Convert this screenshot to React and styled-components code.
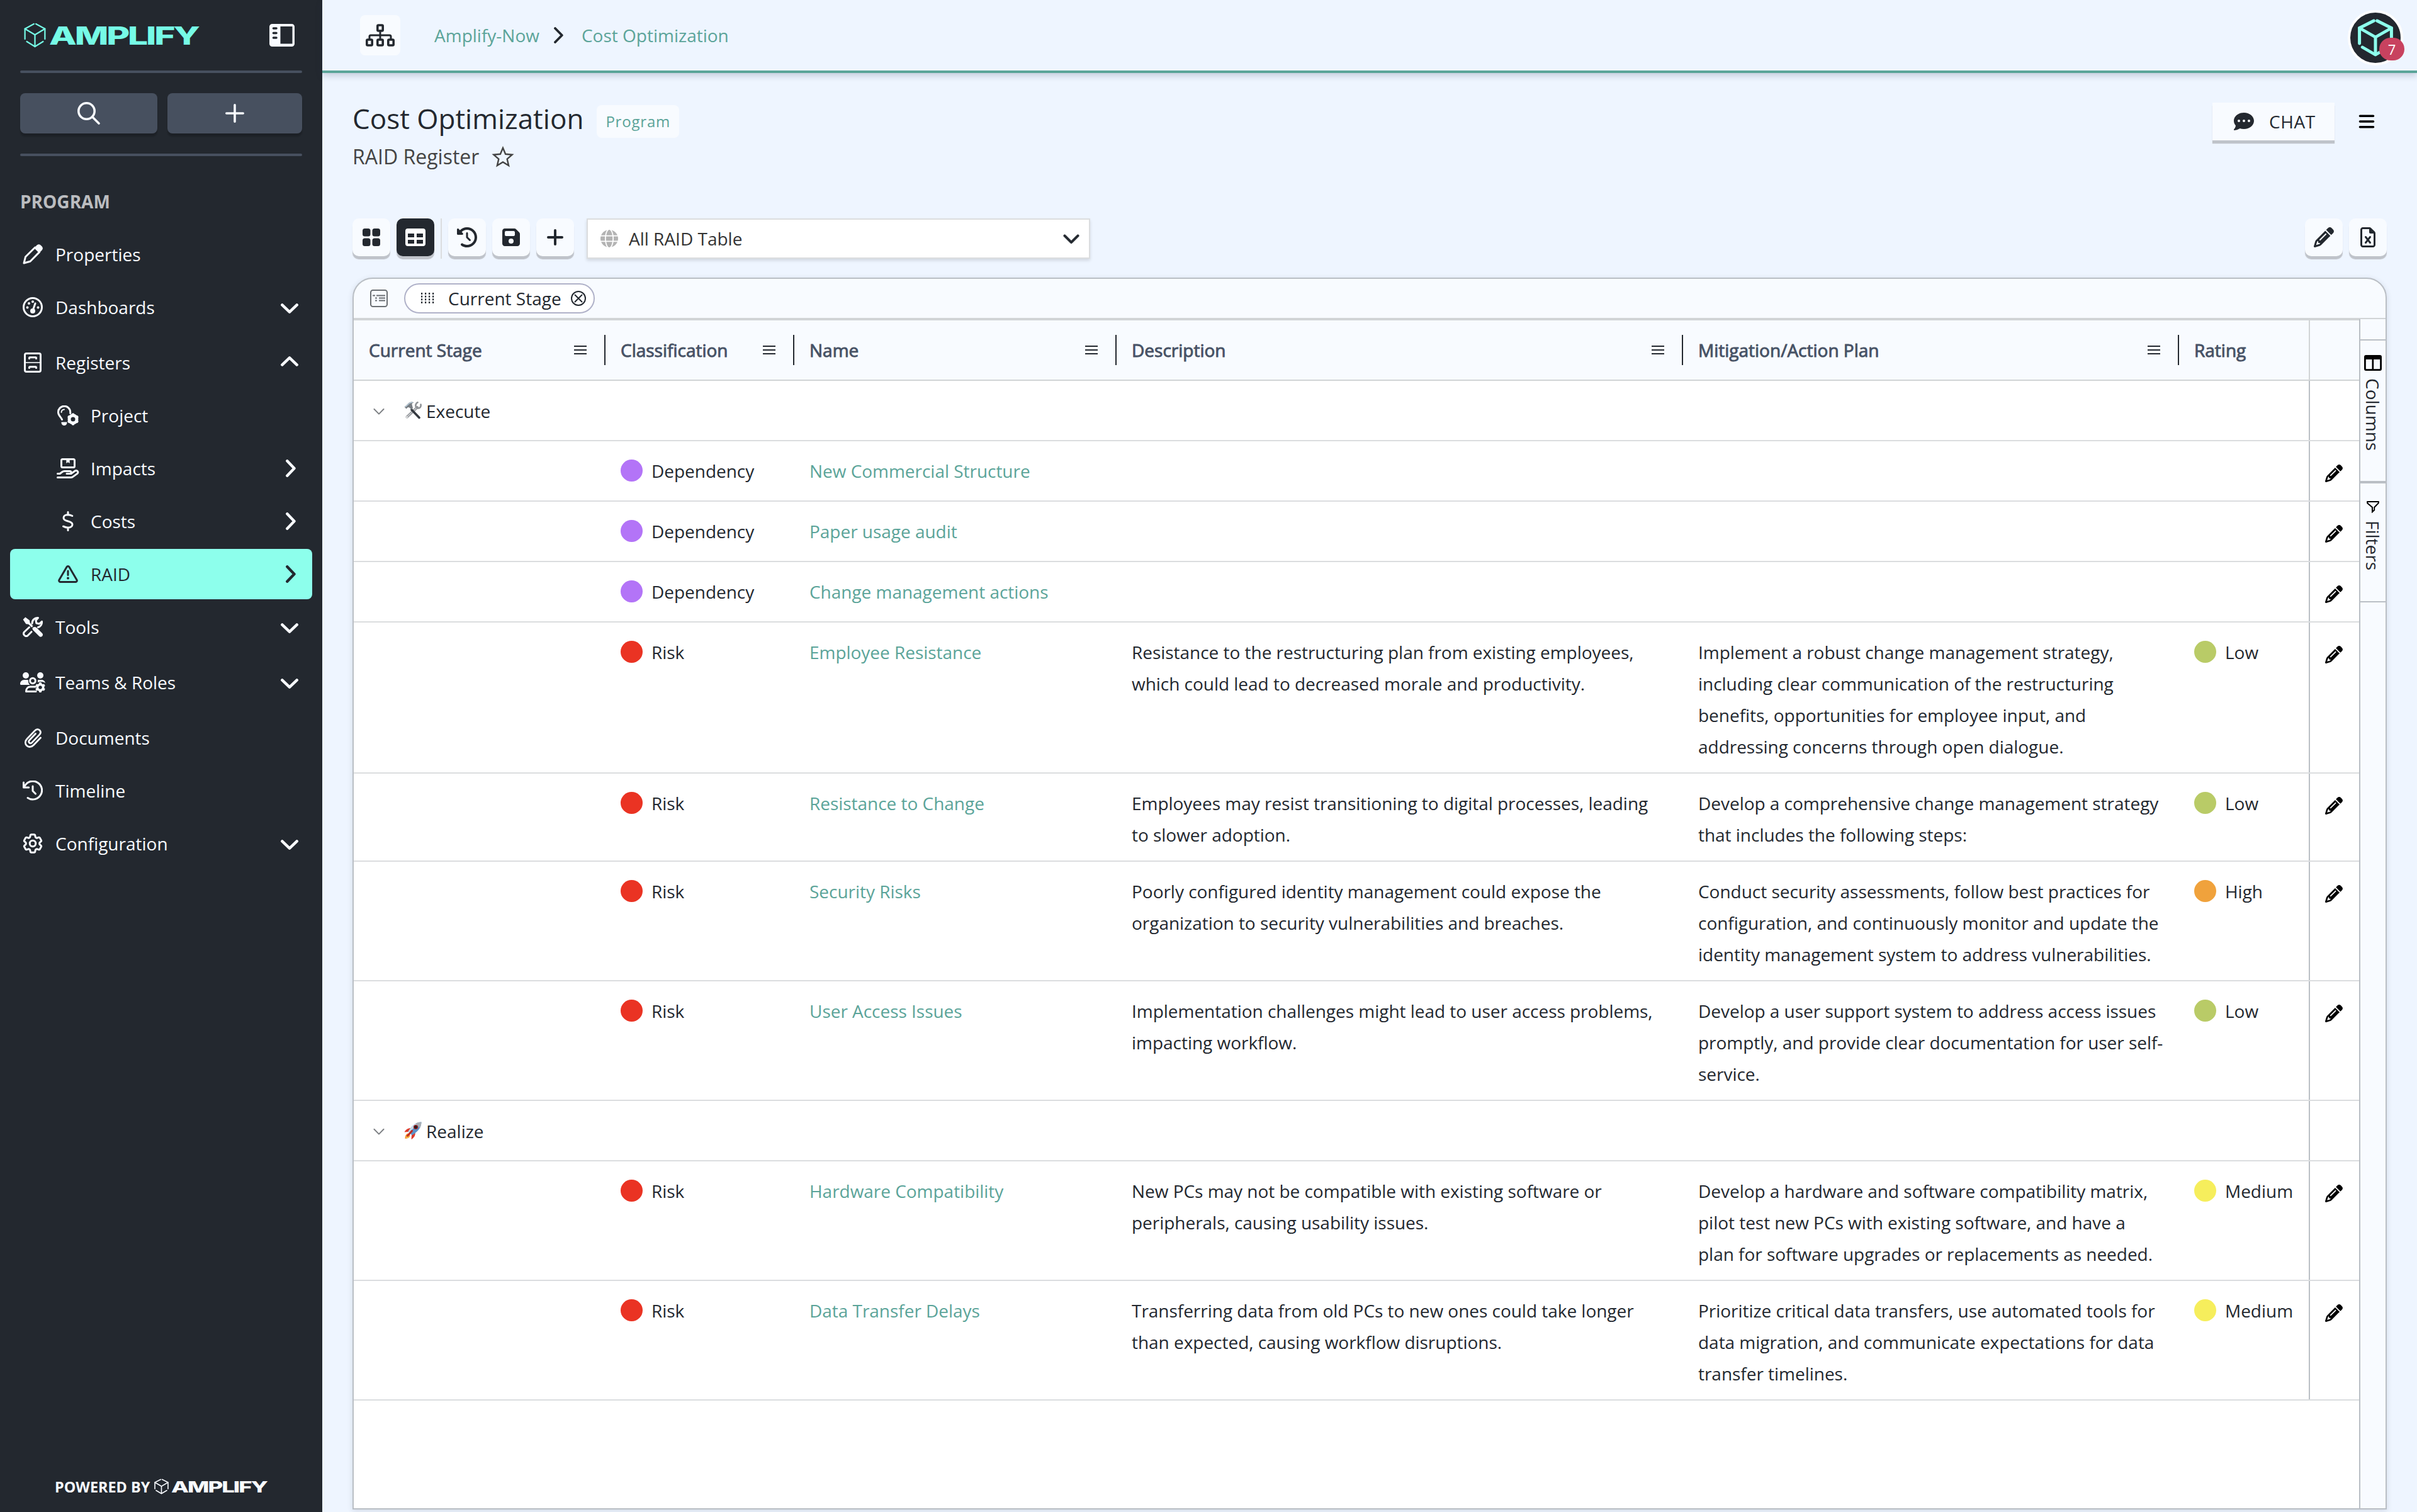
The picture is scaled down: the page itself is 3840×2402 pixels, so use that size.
import React from 'react';
import styled, { createGlobalStyle, css } from 'styled-components';
import {
  FaBars,
  FaChevronDown,
  FaClockRotateLeft,
  FaCommentDots,
  FaFloppyDisk,
  FaGlobe,
  FaPencil,
  FaRegFileExcel,
} from 'react-icons/fa6';
import { HiOutlineCog6Tooth } from 'react-icons/hi2';

const c = {
  ink: '#23282f',
  slate: '#47505f',
  snow: '#f8fbff',
  page: '#eef5ff',
  mint: '#8dffec',
  logo: '#76fbe6',
  teal: '#5ba499',
  line: '#dbdddf',
  headLine: '#d1d4d6',
  frame: '#babfc5',
};

const GlobalStyle = createGlobalStyle`
  *, *::before, *::after { box-sizing: border-box; }
  body {
    margin: 0;
    overflow: hidden;
    background: ${c.page};
    color: ${c.ink};
    font-family: 'Open Sans', 'Noto Sans', sans-serif;
    font-size: 28px;
    line-height: 40px;
  }
  svg { display: block; flex: none; }
  button { font: inherit; color: inherit; border: 0; padding: 0; }
`;

/* ---------- icons ---------- */

const Stroke = ({ w = 32, h = 32, sw = 3, children, ...rest }) => (
  <svg
    width={w}
    height={h}
    viewBox={`0 0 ${w} ${h}`}
    fill="none"
    stroke="currentColor"
    strokeWidth={sw}
    strokeLinecap="round"
    strokeLinejoin="round"
    {...rest}
  >
    {children}
  </svg>
);

const Cog = ({ x, y, r, teeth = 6, ring = 3.4 }) => (
  <g transform={`translate(${x} ${y})`}>
    <circle r={r - 3.4} strokeWidth={ring} />
    {Array.from({ length: teeth }, (_, i) => (
      <rect
        key={i}
        x={-2}
        y={-r}
        width={4}
        height={3.6}
        rx={1}
        fill="currentColor"
        stroke="none"
        transform={`rotate(${(360 / teeth) * i})`}
      />
    ))}
  </g>
);

const CubeMark = ({ w, h, sw }) => (
  <svg
    width={w}
    height={h}
    viewBox="0 0 54 60"
    preserveAspectRatio="none"
    fill="none"
    stroke="currentColor"
    strokeWidth={sw}
    strokeLinejoin="round"
    strokeLinecap="round"
  >
    <path d="M24.5 3 2.5 14.5v24.5" />
    <path d="M29.500 3 51.500 14.500v24.500" />
    <path d="M2.500 14.500 27 29l24.500-14.500" />
    <path d="M27 29v27.500" />
    <path d="M7 45 27 57l20-12" />
  </svg>
);

const SearchIcon = () => (
  <Stroke w={36} h={36} sw={3.6}>
    <circle cx="14.5" cy="14.5" r="12.700" />
    <path d="m24 24 10 10" />
  </Stroke>
);

const PlusIcon = ({ size = 30, sw = 3.6 }) => (
  <Stroke w={size} h={size} sw={sw}>
    <path d={`M${size / 2} ${sw / 2}V${size - sw / 2}M${sw / 2} ${size / 2}H${size - sw / 2}`} />
  </Stroke>
);

const PanelIcon = () => (
  <svg width="40" height="36" viewBox="0 0 40 36">
    <path
      fill="currentColor"
      fillRule="evenodd"
      d="M4.500 0h31A4.500 4.500 0 0 1 40 4.500v27a4.500 4.500 0 0 1-4.500 4.500h-31A4.500 4.500 0 0 1 0 31.500v-27A4.500 4.500 0 0 1 4.500 0ZM17.500 4v27.500h19V4Z"
    />
    <path d="M6.500 7h4.500M6.500 14.500h4.500M6.500 22h4.500" stroke={c.ink} strokeWidth="3.600" strokeLinecap="round" />
  </svg>
);

const SitemapIcon = () => (
  <Stroke w={46} h={36} sw={3.6}>
    <rect x="18.800" y="2" width="8.400" height="9" rx="1.500" />
    <rect x="1.800" y="25" width="8.400" height="9" rx="1.500" />
    <rect x="18.800" y="25" width="8.400" height="9" rx="1.500" />
    <rect x="35.800" y="25" width="8.400" height="9" rx="1.500" />
    <path d="M23 11v13M6 24v-4a2 2 0 0 1 2-2h30a2 2 0 0 1 2 2v4" strokeWidth="3" />
  </Stroke>
);

const PenOutline = () => (
  <Stroke>
    <path d="M2 30 4.500 20 19.500 5.200l7.200 7.200L12 27.200Z" />
    <path
      d="m18.500 5.500 3.800-3.800c2-2 4.500-2 6.300-.300l2 2c1.800 1.800 1.700 4.300-.200 6.300l-3.800 3.800Z"
      fill="currentColor"
      stroke="none"
    />
  </Stroke>
);

const GaugeIcon = () => (
  <Stroke>
    <circle cx="16" cy="16" r="14.500" />
    <path d="M16.500 20 20 10" />
    <g fill="currentColor" stroke="none">
      <circle cx="16" cy="22" r="4" />
      <circle cx="7.500" cy="16.500" r="2" />
      <circle cx="24.500" cy="16.500" r="2" />
      <circle cx="10" cy="10" r="2" />
      <circle cx="16" cy="7.200" r="2" />
    </g>
  </Stroke>
);

const CabinetIcon = () => (
  <Stroke>
    <rect x="3.500" y="1.500" width="25" height="29" rx="2.500" />
    <path d="M4 16h24" strokeWidth="2" opacity="0.8" />
    <path d="M10.500 9.500V8.800q0-1 1-1h9q1 0 1 1v.700M10.500 24.500v-.700q0-1 1-1h9q1 0 1 1v.700" />
  </Stroke>
);

const BulbGearIcon = () => (
  <Stroke w={36} h={32}>
    <path d="M8.500 22.500C7.500 19 2.500 16.500 2.500 11a9.600 9.600 0 0 1 19.200-.500v2" />
    <path d="M7.500 11a4.500 4.500 0 0 1 4.500-4.500" strokeWidth="2" />
    <path d="M7.500 26.500h9v1a4.500 4.500 0 0 1-9 0Z" fill="currentColor" stroke="none" />
    <Cog x={26} y={22} r={9.400} ring={5} />
  </Stroke>
);

const HandBoxIcon = () => (
  <Stroke w={36} h={32}>
    <rect x="7.500" y="1.500" width="21" height="13" rx="2" />
    <path d="M15.300 2h5.400v6L18 6.300 15.300 8Z" fill="currentColor" stroke="none" />
    <path d="M1.500 24.500h3.700l3.600-2.800a6 6 0 0 1 3.500-1.200h8.700a2 2 0 0 1 0 4H16h7l6.300-4.400a3 3 0 0 1 4 .600 2.500 2.500 0 0 1-.500 3.700l-6.600 4.700a6 6 0 0 1-3.400 1.400H1.500" />
  </Stroke>
);

const DollarIcon = () => (
  <Stroke w={20} h={32}>
    <path d="M10 1.500V6M10 26v4.500M16.800 7.500C14 6 11.500 5.800 9.500 5.800 5.500 5.800 3 7.800 3 10.700c0 3.300 3 4.300 7 5.300 4.200 1 7 2.200 7 5.300 0 3-2.800 4.900-7 4.900-2.600 0-5-.700-7.500-2" />
  </Stroke>
);

const WarnIcon = () => (
  <Stroke h={28}>
    <path d="M14 2.700a2.300 2.300 0 0 1 4 0l12 20.500a2.200 2.200 0 0 1-2 3.300H4a2.200 2.200 0 0 1-2-3.300Z" />
    <path d="M16 9v6.500" />
    <circle cx="16" cy="20.500" r="2" fill="currentColor" stroke="none" />
  </Stroke>
);

const ToolsIcon = () => (
  <Stroke>
    <g fill="currentColor" stroke="none">
      <path d="M.600 4.300 4.300.600l6.700 4.900.600 4 5 5-2.300 2.300-5-5-4-.600Z" />
      <path d="M15.500 17.800c1-1.300 3.600-2.700 6.500-.700l8.800 8.700c1.600 1.600 1.600 3.400.200 4.900s-3.500 1.400-5-.100l-8.800-8.800c-1.500-1.500-1.700-2.700-1.700-4Z" />
    </g>
    <path d="m10.500 16.500-8 7.500a4 4 0 0 0 5.500 5.700l6-6" />
    <path d="M15 10.500c0-5.500 4-9.300 9.500-9l-3.500 4 .800 4.500 4.700 1 4-3.700c.500 4.700-2.500 8.200-6 9.200" />
  </Stroke>
);

const TeamGearIcon = () => (
  <Stroke w={40} h={32}>
    <g fill="currentColor" stroke="none">
      <circle cx="9" cy="5" r="5" />
      <circle cx="32" cy="5" r="5" />
      <path d="M0 18.500C0 15 2.500 12 6.500 12h4.300c1 0 1.500.200 2.200.500-.500 3 .500 5.500 2.500 7.500H1.500Q0 20 0 18.500Z" />
      <path d="M28 12.300c.700-.200 1.200-.300 2-.300h4c3.300 0 5.500 2.500 6 5-2.500-1.500-7-3-12-1Z" />
    </g>
    <circle cx="20" cy="13.500" r="4.300" />
    <path d="M25 30.500H9.500c0-4.800 3-7.500 6.500-7.500h8" />
    <Cog x={32} y={24} r={8} ring={3.600} />
  </Stroke>
);

const ClipIcon = () => (
  <Stroke w={28} h={32} sw={2.800}>
    <path d="M26.500 16 15.500 27.500c-3.500 3.600-8 4-11 1s-2.800-7.300.500-10.700L17.500 4.600c2.300-2.400 5.300-2.700 7.400-.600s1.900 5-.400 7.400L12.800 23.600c-1.500 1.500-3 1.600-4.200.400s-1.200-2.800.200-4.200L18.500 9.500" />
  </Stroke>
);

const HistoryIcon = () => (
  <Stroke>
    <path d="M1.500 3v8h8.200" />
    <path d="M2.500 10.500A14.500 14.500 0 1 1 8 27.500" />
    <path d="M16 9v7.500l4.500 4.500" />
  </Stroke>
);

const Chevron = ({ dir, sw = 4.4 }) =>
  dir === 'right' ? (
    <Stroke w={16} h={28} sw={sw}>
      <path d="m2.300 2.300 11.200 11.700L2.300 25.700" />
    </Stroke>
  ) : (
    <Stroke w={28} h={16} sw={sw}>
      <path d={dir === 'up' ? 'M2.300 13.600 14 2.400l11.700 11.200' : 'M2.300 2.400 14 13.600 25.700 2.400'} />
    </Stroke>
  );

const StarIcon = () => (
  <svg width="36" height="34" viewBox="0 0 36 34" fill="none" stroke="currentColor" strokeWidth="2.400">
    <path d="m18 3 4.100 9.800 10.600.900-8 7 2.400 10.300L18 25.500 8.900 31l2.400-10.300-8-7 10.600-.900Z" />
  </svg>
);

const CardsIcon = () => (
  <svg width="28" height="28" viewBox="0 0 28 28" fill="currentColor">
    <rect width="12.500" height="12.500" rx="3.500" />
    <rect x="15.500" width="12.500" height="12.500" rx="3.500" />
    <rect y="15.500" width="12.500" height="12.500" rx="3.500" />
    <rect x="15.500" y="15.500" width="12.500" height="12.500" rx="3.500" />
  </svg>
);

const TableIcon = () => (
  <svg width="32" height="28" viewBox="0 0 32 28">
    <path
      fill="currentColor"
      fillRule="evenodd"
      d="M4 0h24a4 4 0 0 1 4 4v20a4 4 0 0 1-4 4H4a4 4 0 0 1-4-4V4a4 4 0 0 1 4-4ZM4 8v6h10V8ZM18 8v6h10V8ZM4 18v6h10v-6ZM18 18v6h10v-6Z"
    />
  </svg>
);

const GroupIcon = () => (
  <Stroke w={28} h={28} sw={2} stroke="#6b6f73">
    <rect x="1" y="1" width="26" height="26" rx="3.500" />
    <path d="M4 9.500h4M10 9.500h14M8 13.500h3M14 13.500h10M8 17.500h3M14 17.500h10" strokeLinecap="butt" />
  </Stroke>
);

const GripIcon = () => (
  <svg width="22" height="18" viewBox="0 0 22 18" fill="currentColor">
    {[0, 1, 2, 3].map((r) =>
      [0, 1, 2, 3].map((k) => <rect key={`${r}${k}`} x={k * 6} y={r * 4.700} width="2.200" height="2.800" />),
    )}
  </svg>
);

const CloseCircle = () => (
  <Stroke w={24} h={24} sw={2}>
    <circle cx="12" cy="12" r="11" />
    <path d="m6.500 6.500 11 11m0-11-11 11" />
  </Stroke>
);

const MenuIcon = () => (
  <svg width="20" height="14" viewBox="0 0 20 14" fill="currentColor">
    <path d="M0 0h20v2H0zM0 6h20v2H0zM0 12h20v2H0z" />
  </svg>
);

const ColumnsIcon = () => (
  <svg width="28" height="25" viewBox="0 0 28 25">
    <path
      fill="#000"
      fillRule="evenodd"
      d="M3 0h22a3 3 0 0 1 3 3v19a3 3 0 0 1-3 3H3a3 3 0 0 1-3-3V3a3 3 0 0 1 3-3ZM2.800 7v14.500q0 .700.700.700h9V7ZM15.200 7v15.200h9.300q.700 0 .700-.700V7Z"
    />
  </svg>
);

const FilterIcon = () => (
  <svg width="20" height="19" viewBox="0 0 20 19" fill="none" stroke="#000" strokeWidth="2">
    <path d="M1.200 1h17.600v2.200L12.200 10v4.200l-3.200 3V10L1.200 3.200Z" />
  </svg>
);

const HammerWrench = () => (
  <svg width="28" height="28" viewBox="0 0 28 28" fill="none" strokeLinecap="round">
    <path d="M21 9 4.500 24.500" stroke="#8f9296" strokeWidth="4" />
    <path d="M20.500 9.500 6 23" stroke="#cfd2d5" strokeWidth="1.400" />
    <path d="m12 13 12 12.500" stroke="#34393f" strokeWidth="3.600" />
    <path d="M26.500 4.500c.800 3.700-1.500 6.500-4.500 6-2.800-.500-4.300-3.200-3.300-6C19.200 3 20 1.800 21.500 1.300" stroke="#8f9296" strokeWidth="2.600" />
    <path d="M.700 8.500 7 2.500C10 .200 13 0 15.500 1.200c-2.500.700-3.500 2-2.800 4.300l1.300 4.800-2.500 2.500L8.500 9.500c-1.500-1-2.500-.600-3.500.5l-1.500 1.500Z" fill="#787d83" />
    <path d="M2.500 8 8 3c2-1.500 3.500-1.800 5-1.700" stroke="#b9cfdd" strokeWidth="1.500" />
    <circle cx="4.500" cy="24.500" r="1.200" fill="#fff" />
  </svg>
);

const Rocket = () => (
  <svg width="28" height="28" viewBox="0 0 28 28">
    <path d="M11.500 10.500C7 9.500 2.500 12.500.500 16.500l7-.500ZM17.500 17c1 4.500-2 9-6 11l.500-7Z" fill="#e03a2a" />
    <path d="M6.500 18.500C3 19 1.500 22.500 1.500 27c4.500-.200 8-2 8-5.500Z" fill="#f3912f" />
    <path d="M6.500 20.500c-2 .700-3 2.700-3 5 2.500-.200 4.300-1.300 5-3.200Z" fill="#fbe04b" />
    <path d="M27.500.500C20 .700 13.500 4.500 6.500 15.500l6 6C23.500 15 27.300 8 27.500.500Z" fill="#5d92c8" />
    <path d="M27.500.500C20 .700 13.500 4.500 6.500 15.500l2 2C15 9.500 21 4.500 27.500.500Z" fill="#c6d9e8" />
    <path d="M27.500.500c-3.500.100-6.500.700-9.500 2.500l7 7c1.800-3 2.400-6 2.500-9.500Z" fill="#a7aeb5" />
    <circle cx="18.500" cy="8.500" r="3.600" fill="#a32020" />
    <circle cx="18.500" cy="8.500" r="2.300" fill="#1c1f24" />
    <path d="M12.500 14.500 5.500 22.500" stroke="#c22c22" strokeWidth="3" strokeLinecap="round" />
  </svg>
);

/* ---------- brand ---------- */

const BrandRow = styled.div`
  display: flex;
  align-items: center;
  gap: ${(p) => p.$gap}px;
  color: ${(p) => p.$color};
`;

const Wordmark = ({ w, size }) => (
  <svg width={w + 8} height={size * 1.4} viewBox={`0 0 ${w + 8} ${size * 1.4}`} fill="currentColor" overflow="visible">
    <text
      x="0"
      y={size * 1.075}
      fontFamily="Inter, 'Liberation Sans', sans-serif"
      fontWeight="800"
      fontSize={size}
      letterSpacing={-size * 0.055}
      textLength={w}
      lengthAdjust="spacingAndGlyphs"
    >
      AMPLIFY
    </text>
  </svg>
);

/* ---------- sidebar ---------- */

const Shell = styled.div`
  display: flex;
  width: 3840px;
  height: 2402px;
  overflow: hidden;
`;

const Sidebar = styled.aside`
  display: flex;
  flex-direction: column;
  width: 512px;
  flex: none;
  background: ${c.ink};
  color: ${c.snow};
`;

const SideTop = styled.div`
  display: flex;
  align-items: center;
  justify-content: space-between;
  height: 112px;
  padding: 0 44px 0 38px;
`;

const Rule = styled.hr`
  width: 448px;
  height: 4px;
  margin: 0 32px;
  border: 0;
  border-radius: 2px;
  background: ${c.slate};
`;

const QuickActions = styled.div`
  display: grid;
  grid-template-columns: 218px 214px;
  gap: 16px;
  padding: 32px;
`;

const QuickButton = styled.button`
  display: flex;
  align-items: center;
  justify-content: center;
  height: 64px;
  border-radius: 8px;
  background: ${c.slate};
  color: ${c.snow};
  box-shadow: 0 5px 2px rgba(0, 0, 0, 0.18);
`;

const SectionTitle = styled.h2`
  margin: 52px 0 24px 32px;
  font-size: 28px;
  line-height: 40px;
  font-weight: 700;
  color: #bbbdc0;
`;

const NavItem = styled.a`
  display: flex;
  align-items: center;
  height: 80px;
  margin: 0 16px ${(p) => p.$after}px;
  padding: 0 22px 0 ${(p) => (p.$sub ? 68 : 12)}px;
  border-radius: 8px;
  ${(p) =>
    p.$active &&
    css`
      background: ${c.mint};
      color: ${c.ink};
    `}
`;

const NavIcon = styled.span`
  display: flex;
  justify-content: center;
  width: 48px;
  margin-right: 12px;
`;

const NavLabel = styled.span`
  flex: 1;
`;

const NavArrow = styled.span`
  display: flex;
  justify-content: center;
  width: 28px;
  padding-top: ${(p) => (p.$dir === 'down' ? 4 : 0)}px;
  padding-bottom: ${(p) => (p.$dir === 'up' ? 4 : 0)}px;
  padding-left: ${(p) => (p.$dir === 'right' ? 4 : 0)}px;
`;

const Powered = styled.div`
  display: flex;
  align-items: center;
  gap: 7px;
  margin: auto 0 20px 87px;
  font-size: 23.400px;
  font-weight: 700;
  line-height: 40px;
`;

const nav = [
  { label: 'Properties', icon: <PenOutline />, after: 4 },
  { label: 'Dashboards', icon: <GaugeIcon />, dir: 'down', after: 8 },
  { label: 'Registers', icon: <CabinetIcon />, dir: 'up', after: 4 },
  { label: 'Project', icon: <BulbGearIcon />, sub: true, after: 4 },
  { label: 'Impacts', icon: <HandBoxIcon />, sub: true, dir: 'right', after: 4 },
  { label: 'Costs', icon: <DollarIcon />, sub: true, dir: 'right', after: 4 },
  { label: 'RAID', icon: <WarnIcon />, sub: true, dir: 'right', active: true, after: 4 },
  { label: 'Tools', icon: <ToolsIcon />, dir: 'down', after: 8 },
  { label: 'Teams & Roles', icon: <TeamGearIcon />, dir: 'down', after: 8 },
  { label: 'Documents', icon: <ClipIcon />, after: 4 },
  { label: 'Timeline', icon: <HistoryIcon />, after: 4 },
  { label: 'Configuration', icon: <HiOutlineCog6Tooth size={38} strokeWidth={1.9} />, dir: 'down', after: 0 },
];

/* ---------- top bar and page heading ---------- */

const Main = styled.main`
  display: flex;
  flex-direction: column;
  flex: 1;
  min-width: 0;
`;

const TopBar = styled.header`
  display: flex;
  align-items: center;
  height: 116px;
  flex: none;
  padding: 0 20px 0 60px;
  border-bottom: 4px solid ${c.teal};
  box-shadow: 0 4px 10px rgba(40, 50, 80, 0.22);
`;

const MapButton = styled.button`
  display: flex;
  align-items: center;
  justify-content: center;
  width: 64px;
  height: 64px;
  margin-right: 54px;
  border-radius: 8px;
  background: ${c.snow};
`;

const Crumbs = styled.nav`
  display: flex;
  align-items: center;
  flex: 1;
  gap: 22px;
  a { color: ${c.teal}; }
  svg { margin: 0 7px 0 1px; }
`;

const Avatar = styled.div`
  position: relative;
  display: flex;
  align-items: center;
  justify-content: center;
  width: 88px;
  height: 88px;
  margin: 8px 2px 0 0;
  border: 4px solid #fff;
  border-radius: 50%;
  background: ${c.ink};
  color: ${c.mint};
`;

const Badge = styled.span`
  position: absolute;
  right: -6px;
  bottom: 4px;
  width: 40px;
  height: 36px;
  border-radius: 18px;
  background: #c8425f;
  color: #fff;
  font-size: 22px;
  line-height: 37px;
  text-align: center;
`;

const Heading = styled.section`
  display: flex;
  align-items: flex-start;
  justify-content: space-between;
  height: 231px;
  flex: none;
  padding: 47px 48px 0;
`;

const TitleRow = styled.div`
  display: flex;
  align-items: center;
  gap: 21px;
  height: 60px;
`;

const Title = styled.h1`
  margin: 0 0 11px;
  font-size: 44px;
  line-height: 60px;
  font-weight: 400;
`;

const Tag = styled.span`
  height: 52px;
  margin-top: 0;
  padding: 0 14px;
  border-radius: 8px;
  background: ${c.snow};
  color: ${c.teal};
  font-size: 24px;
  line-height: 51px;
  letter-spacing: 0.8px;
`;

const Subtitle = styled.div`
  display: flex;
  align-items: center;
  gap: 20px;
  height: 40px;
  margin-top: 6px;
  font-size: 32px;
  color: #444444;
`;

const HeadingActions = styled.div`
  display: flex;
  align-items: center;
  gap: 37px;
  padding-right: 18px;
`;

const ChatButton = styled.button`
  display: flex;
  align-items: center;
  gap: 24px;
  width: 194px;
  height: 60px;
  padding-left: 34px;
  background: ${c.snow};
  box-shadow: 0 5px 1px #bfc3ca;
  letter-spacing: 0.6px;
`;

/* ---------- toolbar ---------- */

const Toolbar = styled.section`
  display: flex;
  align-items: flex-start;
  gap: 10px;
  height: 94px;
  flex: none;
  padding: 0 48px;
`;

const ToolButton = styled.button`
  display: flex;
  align-items: center;
  justify-content: center;
  width: 60px;
  height: 60px;
  border-radius: 10px;
  background: ${(p) => (p.$active ? c.ink : c.snow)};
  color: ${(p) => (p.$active ? '#fff' : c.ink)};
  box-shadow: 0 5px 1px #bfc3ca;
`;

const ToolDivider = styled.span`
  width: 2px;
  height: 64px;
  background: ${c.line};
`;

const Select = styled.div`
  display: flex;
  align-items: center;
  width: 800px;
  height: 64px;
  margin: 0 auto 0 10px;
  padding: 0 14px 0 20px;
  border: 2px solid ${c.line};
  background: #fff;
  color: #333;
  box-shadow: 0 3px 5px rgba(0, 0, 0, 0.12);
  span { flex: 1; margin-left: 17px; }
  svg:last-child { stroke: ${c.ink}; stroke-width: 14px; margin-bottom: 2px; }
`;

/* ---------- grid ---------- */

const GridPanel = styled.section`
  display: flex;
  flex-direction: column;
  width: 3232px;
  height: 1957px;
  margin-left: 48px;
  border: 2px solid ${c.frame};
  border-radius: 32px 32px 0 0;
  background: ${c.snow};
  box-shadow: 0 2px 8px rgba(60, 70, 90, 0.16);
  overflow: hidden;
`;

const GroupBar = styled.div`
  display: flex;
  align-items: center;
  gap: 26px;
  height: 64px;
  flex: none;
  padding: 0 0 0 26px;
  border-bottom: 2px solid ${c.headLine};
`;

const Pill = styled.div`
  display: flex;
  align-items: center;
  width: 303px;
  height: 48px;
  padding: 0 12px 0 25px;
  border: 2px solid #b0b2c9;
  border-radius: 24px;
  background: #fff;
  span { flex: 1; margin-left: 21px; }
`;

const GridBody = styled.div`
  display: flex;
  flex: 1;
  min-height: 0;
`;

const Table = styled.div`
  width: 3186px;
  border-top: 2px solid ${c.headLine};
  background: #fff;
`;

const rowGrid = css`
  display: grid;
  grid-template-columns: 400px 300px 512px 900px 788px 208px 78px;
`;

const HeadRow = styled.div`
  ${rowGrid}
  height: 96px;
  background: ${c.snow};
  border-bottom: 2px solid ${c.headLine};
`;

const HeadCell = styled.div`
  display: flex;
  align-items: center;
  justify-content: space-between;
  padding: 0 0 0 24px;
  color: #475265;
  -webkit-text-stroke: 0.9px #475265;
  ${(p) => p.$last && css`border-right: 2px solid ${c.headLine};`}
`;

const HeadTools = styled.span`
  display: flex;
  align-items: center;
  gap: 28px;
  color: ${c.ink};
`;

const ColumnEdge = styled.i`
  width: 2px;
  height: 48px;
  background: ${c.ink};
`;

const Row = styled.div`
  ${rowGrid}
  min-height: 96px;
  border-bottom: 2px solid ${c.line};
`;

const Cell = styled.div`
  padding: 22px 23px 16px 24px;
  line-height: 50px;
  letter-spacing: -0.03px;
`;

const LinkCell = styled(Cell)`
  color: ${c.teal};
`;

const RatingCell = styled(Cell)`
  padding-right: 0;
  border-right: 2px solid ${c.frame};
`;

const EditCell = styled.div`
  padding: 37px 0 0 24px;
  color: #000;
`;

const GroupCell = styled.div`
  display: flex;
  align-items: center;
  grid-column: 1 / 7;
  padding: 2px 0 0 31px;
  border-right: 2px solid ${c.frame};
  > svg { margin-top: 2px; }
`;

const GroupIconSlot = styled.span`
  margin: 0 7px 2px 31px;
`;

const Status = styled.div`
  display: flex;
  align-items: center;
  gap: 14px;
`;

const Dot = styled.i`
  width: 35px;
  height: 35px;
  margin-bottom: 1px;
  flex: none;
  border-radius: 50%;
  background: ${(p) => p.$color};
`;

const SideTabs = styled.div`
  display: flex;
  flex-direction: column;
  flex: 1;
  border-left: 2px solid ${c.frame};
  padding-top: 32px;
`;

const SideTab = styled.div`
  display: flex;
  flex-direction: column;
  align-items: center;
  gap: 12px;
  height: ${(p) => p.$h}px;
  padding-top: ${(p) => p.$top}px;
  border-top: 2px solid ${c.frame};
  border-bottom: 2px solid ${c.frame};
  span {
    writing-mode: vertical-rl;
    line-height: 40px;
  }
`;

const statusColors = {
  Dependency: '#b374f7',
  Risk: '#ea3323',
  Low: '#b9cb67',
  High: '#f0a23c',
  Medium: '#f6ee5c',
};

const columns = ['Current Stage', 'Classification', 'Name', 'Description', 'Mitigation/Action Plan'];

const groups = [
  {
    name: 'Execute',
    icon: <HammerWrench />,
    rows: [
      ['Dependency', 'New Commercial Structure'],
      ['Dependency', 'Paper usage audit'],
      ['Dependency', 'Change management actions'],
      [
        'Risk',
        'Employee Resistance',
        'Resistance to the restructuring plan from existing employees, which could lead to decreased morale and productivity.',
        'Implement a robust change management strategy, including clear communication of the restructuring benefits, opportunities for employee input, and addressing concerns through open dialogue.',
        'Low',
      ],
      [
        'Risk',
        'Resistance to Change',
        'Employees may resist transitioning to digital processes, leading to slower adoption.',
        'Develop a comprehensive change management strategy that includes the following steps:',
        'Low',
      ],
      [
        'Risk',
        'Security Risks',
        'Poorly configured identity management could expose the organization to security vulnerabilities and breaches.',
        'Conduct security assessments, follow best practices for configuration, and continuously monitor and update the identity management system to address vulnerabilities.',
        'High',
      ],
      [
        'Risk',
        'User Access Issues',
        'Implementation challenges might lead to user access problems, impacting workflow.',
        'Develop a user support system to address access issues promptly, and provide clear documentation for user self-service.',
        'Low',
      ],
    ],
  },
  {
    name: 'Realize',
    icon: <Rocket />,
    rows: [
      [
        'Risk',
        'Hardware Compatibility',
        'New PCs may not be compatible with existing software or peripherals, causing usability issues.',
        'Develop a hardware and software compatibility matrix, pilot test new PCs with existing software, and have a plan for software upgrades or replacements as needed.',
        'Medium',
      ],
      [
        'Risk',
        'Data Transfer Delays',
        'Transferring data from old PCs to new ones could take longer than expected, causing workflow disruptions.',
        'Prioritize critical data transfers, use automated tools for data migration, and communicate expectations for data transfer timelines.',
        'Medium',
      ],
    ],
  },
];

const StatusValue = ({ value }) =>
  value ? (
    <Status>
      <Dot $color={statusColors[value]} />
      {value}
    </Status>
  ) : null;

const GroupSection = ({ group }) => (
  <>
    <Row>
      <GroupCell>
        <Stroke w={18} h={10} sw={2} stroke="#7d8084">
          <path d="m1.500 1 7.500 7.600L16.500 1" />
        </Stroke>
        <GroupIconSlot>{group.icon}</GroupIconSlot>
        {group.name}
      </GroupCell>
      <div />
    </Row>
    {group.rows.map(([kind, name, description, plan, rating]) => (
      <Row key={name}>
        <Cell />
        <Cell>
          <StatusValue value={kind} />
        </Cell>
        <LinkCell>{name}</LinkCell>
        <Cell>{description}</Cell>
        <Cell>{plan}</Cell>
        <RatingCell>
          <StatusValue value={rating} />
        </RatingCell>
        <EditCell>
          <FaPencil size={28} />
        </EditCell>
      </Row>
    ))}
  </>
);

export default function App() {
  return (
    <Shell>
      <GlobalStyle />
      <Sidebar>
        <SideTop>
          <BrandRow $gap={5} $color={c.logo}>
            <CubeMark w={35} h={40} sw={3.4} />
            <Wordmark w={237} size={40} />
          </BrandRow>
          <PanelIcon />
        </SideTop>
        <Rule />
        <QuickActions>
          <QuickButton><SearchIcon /></QuickButton>
          <QuickButton><PlusIcon /></QuickButton>
        </QuickActions>
        <Rule />
        <SectionTitle>PROGRAM</SectionTitle>
        {nav.map((n) => (
          <NavItem key={n.label} $sub={n.sub} $active={n.active} $after={n.after}>
            <NavIcon>{n.icon}</NavIcon>
            <NavLabel>{n.label}</NavLabel>
            {n.dir && (
              <NavArrow $dir={n.dir}>
                <Chevron dir={n.dir} />
              </NavArrow>
            )}
          </NavItem>
        ))}
        <Powered>
          POWERED BY
          <BrandRow $gap={4} $color={c.snow}>
            <CubeMark w={23} h={25} sw={3.8} />
            <Wordmark w={152} size={24.5} />
          </BrandRow>
        </Powered>
      </Sidebar>

      <Main>
        <TopBar>
          <MapButton><SitemapIcon /></MapButton>
          <Crumbs>
            <a>Amplify-Now</a>
            <Stroke w={15} h={26} sw={3.8}>
              <path d="m2 2 10.800 11L2 24" />
            </Stroke>
            <a>Cost Optimization</a>
          </Crumbs>
          <Avatar>
            <CubeMark w={56} h={60} sw={4.8} />
            <Badge>7</Badge>
          </Avatar>
        </TopBar>

        <Heading>
          <div>
            <TitleRow>
              <Title>Cost Optimization</Title>
              <Tag>Program</Tag>
            </TitleRow>
            <Subtitle>
              RAID Register
              <StarIcon />
            </Subtitle>
          </div>
          <HeadingActions>
            <ChatButton>
              <FaCommentDots size={32} />
              CHAT
            </ChatButton>
            <FaBars size={28} color="#000" />
          </HeadingActions>
        </Heading>

        <Toolbar>
          <ToolButton><CardsIcon /></ToolButton>
          <ToolButton $active><TableIcon /></ToolButton>
          <ToolDivider />
          <ToolButton><FaClockRotateLeft size={32} /></ToolButton>
          <ToolButton><FaFloppyDisk size={32} /></ToolButton>
          <ToolButton><PlusIcon size={26} sw={4} /></ToolButton>
          <Select>
            <FaGlobe size={28} color="#b3b3b3" />
            <span>All RAID Table</span>
            <FaChevronDown size={28} color={c.ink} />
          </Select>
          <ToolButton><FaPencil size={32} /></ToolButton>
          <ToolButton><FaRegFileExcel size={32} /></ToolButton>
        </Toolbar>

        <GridPanel>
          <GroupBar>
            <GroupIcon />
            <Pill>
              <GripIcon />
              <span>Current Stage</span>
              <CloseCircle />
            </Pill>
          </GroupBar>
          <GridBody>
            <Table>
              <HeadRow>
                {columns.map((name) => (
                  <HeadCell key={name}>
                    {name}
                    <HeadTools>
                      <MenuIcon />
                      <ColumnEdge />
                    </HeadTools>
                  </HeadCell>
                ))}
                <HeadCell $last>Rating</HeadCell>
                <div />
              </HeadRow>
              {groups.map((g) => (
                <GroupSection key={g.name} group={g} />
              ))}
            </Table>
            <SideTabs>
              <SideTab $h={227} $top={23}>
                <ColumnsIcon />
                <span>Columns</span>
              </SideTab>
              <SideTab $h={191} $top={28}>
                <FilterIcon />
                <span>Filters</span>
              </SideTab>
            </SideTabs>
          </GridBody>
        </GridPanel>
      </Main>
    </Shell>
  );
}
